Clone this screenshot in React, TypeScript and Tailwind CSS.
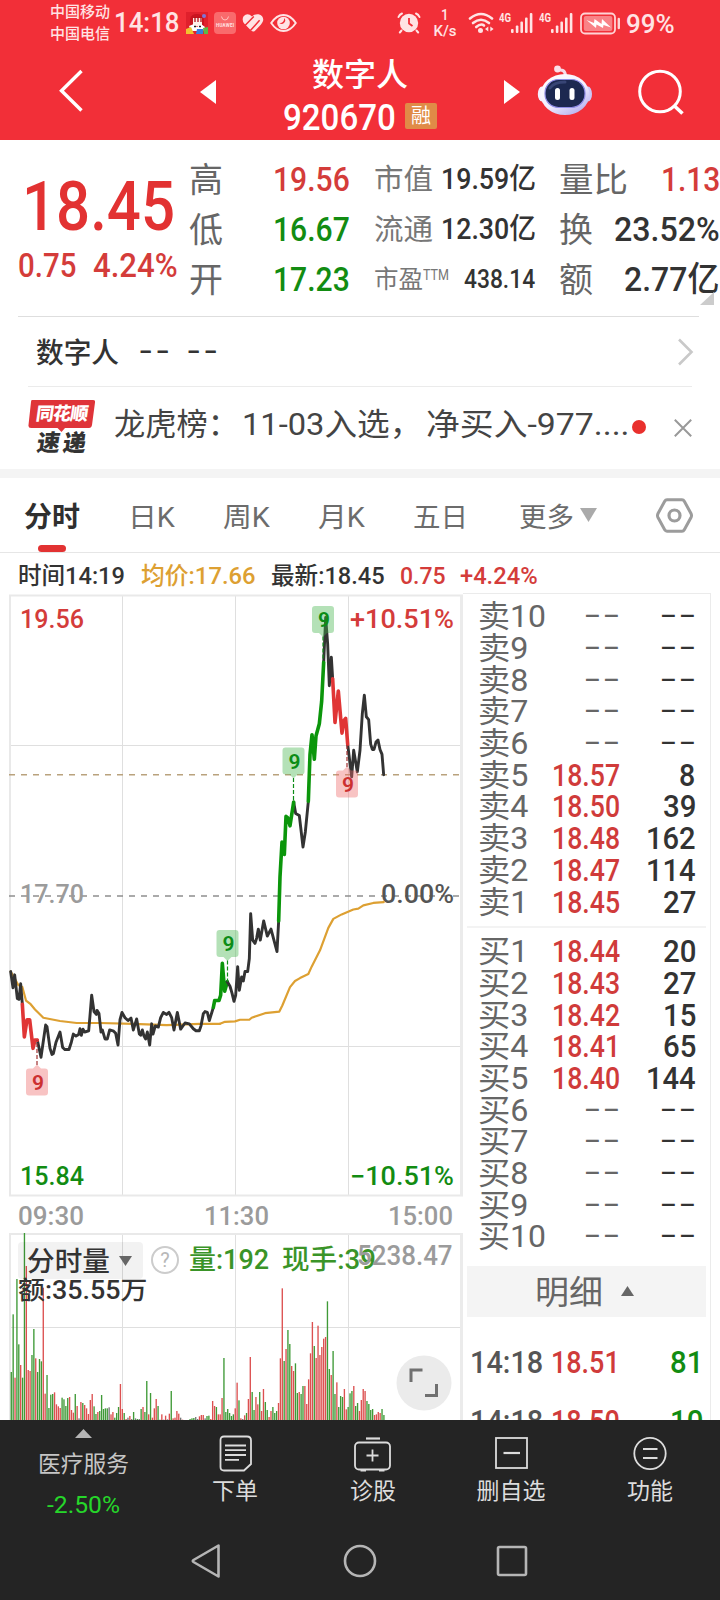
import { useLayoutEffect, useRef, useState, type ReactNode } from "react";

/** Single line of text, horizontally condensed or widened to an exact width. */
function Fit({ w, className = "", children }: { w: number; className?: string; children: ReactNode }) {
  const ref = useRef<HTMLSpanElement>(null);
  const [scale, setScale] = useState(1);
  useLayoutEffect(() => {
    if (ref.current) setScale(w / ref.current.offsetWidth);
  }, [w, children]);
  return (
    <span className={"block shrink-0 leading-none " + className} style={{ width: w }}>
      <span ref={ref} className="inline-block origin-left whitespace-nowrap align-top" style={{ transform: `scaleX(${scale})` }}>
        {children}
      </span>
    </span>
  );
}

function Signal() {
  return (
    <div className="flex h-[22px] w-[34px] shrink-0">
      <Fit w={12} className="text-[12px] font-bold">4G</Fit>
      <svg width="22" height="22" viewBox="0 0 22 22" fill="#ffe3e4">
        <rect x="0" y="17" width="2.6" height="4" rx="1" />
        <rect x="4.8" y="13.5" width="2.6" height="7.5" rx="1" />
        <rect x="9.4" y="9.5" width="2.6" height="11.5" rx="1" />
        <rect x="14" y="5.5" width="2.6" height="15.5" rx="1" />
        <rect x="18.8" y="1" width="2.6" height="20" rx="1" />
      </svg>
    </div>
  );
}

function StatusBar() {
  return (
    <div className="flex h-[46px] items-center text-[#ffe3e4]">
      <div className="ml-[50px] w-[60px] text-[15px] leading-[22px] font-medium">
        <Fit w={60} className="leading-[22px]!">中国移动</Fit>
        <Fit w={60} className="leading-[22px]!">中国电信</Fit>
      </div>
      <Fit w={66} className="ml-[4px] text-[27px] font-medium">14:18</Fit>
      <svg className="ml-[6px]" width="22" height="22" viewBox="0 0 22 22">
        <rect width="22" height="22" fill="#e0202c" />
        <path d="M4 7Q5 2 11 2Q17 2 18 7V14H4Z" fill="#c9141f" />
        <path d="M7 6H16V14H7Z" fill="#fff0e8" />
        <path d="M9 5V10M12 5V10M15 5V10" stroke="#b3101a" strokeWidth="1.3" />
        <path d="M3 14L8 12L11 15L15 12L19 15L17 19H5Z" fill="#fff" />
        <path d="M8 14.5h2M13 14.5h2" stroke="#222" strokeWidth="1.5" />
        <path d="M0 17L5 15L8 22H0Z" fill="#f2c230" />
        <path d="M11 17H17V22H10Z" fill="#3a7ddc" />
        <path d="M17 16L22 15V22H18Z" fill="#5cb946" />
        <circle cx="18" cy="4" r="2" fill="#7d74d8" />
      </svg>
      <svg className="ml-[6px]" width="22" height="22" viewBox="0 0 22 22">
        <rect width="22" height="22" rx="4" fill="#f96a6c" />
        <path d="M7.5 4.5Q8 8 11 8Q14 8 14.5 4.5" fill="none" stroke="#ffc4c0" strokeWidth="1" />
        <text x="2" y="14.5" fontSize="4.5" fontWeight="700" fill="#ffe3e4" textLength="18">HUAWEI</text>
      </svg>
      <svg className="ml-[6px]" width="22" height="20" viewBox="0 0 22 20">
        <path d="M10 3.6Q12.500 .8 16.500 1.200Q21.300 2.200 21.300 7Q20.800 9.500 19 11.500L12.800 18Q11 19.200 9.300 17.800L2.400 10.800Q-.6 7 1.600 3.300Q5.500 -1 10 3.600Z" fill="#ffe3e4" />
        <path d="M2.800 12.800L11.800 3.400M8.400 17.600L17.600 7.200" stroke="#f22f38" strokeWidth="1.500" />
      </svg>
      <svg className="ml-[6px]" width="27" height="20" viewBox="0 0 27 20">
        <path d="M1.2 10Q6.5 2 13.5 2T25.8 10Q20.5 18 13.5 18T1.2 10Z" fill="none" stroke="#ffe3e4" strokeWidth="1.9" />
        <circle cx="13.5" cy="10" r="6.3" fill="#ffe3e4" />
        <path d="M9.4 10A4.1 4.1 0 0 0 14 5A2.6 2.6 0 1 1 9.4 10Z" fill="#f22f38" />
      </svg>
      <svg className="ml-[100px]" width="24" height="22" viewBox="0 0 24 22">
        <circle cx="12" cy="11" r="9.2" fill="#ffe3e4" />
        <path d="M12 6V11.5L15.5 14" fill="none" stroke="#f22f38" strokeWidth="1.8" />
        <path d="M1.5 5Q2.5 2.5 5 1.5M22.5 5Q21.500 2.500 19 1.500M4.500 18.500L2.800 20.500M19.500 18.500L21.200 20.500" stroke="#ffe3e4" strokeWidth="2" fill="none" strokeLinecap="round" />
      </svg>
      <div className="ml-[12px] flex w-[24px] flex-col items-center gap-[1px] pt-[1px] text-[15px] font-medium">
        <Fit w={8}>1</Fit>
        <Fit w={23}>K/s</Fit>
      </div>
      <svg className="ml-[11px]" width="27" height="22" viewBox="0 0 27 22" fill="none" stroke="#ffe3e4" strokeWidth="2.6" strokeLinecap="round">
        <path d="M2 6.5Q13 -2.5 24 6.5" />
        <path d="M5 11Q13 4.5 21 11" />
        <path d="M8.2 15Q13 11 16 13.5" />
        <circle cx="12.5" cy="18.5" r="1.2" fill="#ffe3e4" />
        <path d="M20.3 14.5V19.5L17 17ZM22.3 14.5V19.5L25.6 17Z" fill="#ffe3e4" stroke="none" />
      </svg>
      <div className="ml-[4px] flex gap-[6px]">
        <Signal />
        <Signal />
      </div>
      <svg className="ml-[7px]" width="42" height="23" viewBox="0 0 42 23">
        <rect x="1" y="1.5" width="34" height="20" rx="4" fill="none" stroke="#ffd3d5" strokeWidth="1.8" />
        <rect x="3.8" y="4" width="28.5" height="15" rx="2" fill="#f98287" />
        <path d="M6.5 8L14 11L14.5 7L21.5 12L22 7L31 15.5L23.5 13L23 16L16.5 12.5L16 16Z" fill="#fff" />
        <path d="M38.8 7V16" stroke="#ffd3d5" strokeWidth="2.4" strokeLinecap="round" />
      </svg>
      <Fit w={49} className="ml-[4px] pt-[2px] text-[26px] font-medium">99%</Fit>
    </div>
  );
}

function TitleBar() {
  return (
    <div className="flex h-[94px] items-start text-white">
      <svg className="mt-[23px] ml-[58px] shrink-0" width="26" height="44" viewBox="0 0 26 44">
        <path d="M23.5 2L3.5 21.7L23.5 41.5" fill="none" stroke="#fff" strokeWidth="3.4" />
      </svg>
      <svg className="mt-[34px] ml-[116px] shrink-0" width="16" height="24"><path d="M16 0V24L0 12Z" fill="#fff" /></svg>
      <div className="ml-[67px] w-[154px] shrink-0 pt-[13px]">
        <Fit w={96} className="ml-[29px] text-[32px] font-medium">数字人</Fit>
        <div className="mt-[7px] flex h-[36px] items-center">
          <Fit w={113} className="pt-[4px] text-[36px] font-medium">920670</Fit>
          <span className="ml-[9px] flex h-[26px] w-[32px] items-center justify-center rounded-[2px] bg-[#e08b47] text-[20px] leading-none">融</span>
        </div>
      </div>
      <svg className="mt-[34px] ml-[67px] shrink-0" width="16" height="24"><path d="M0 0V24L16 12Z" fill="#fff" /></svg>
      <svg className="mt-[18px] ml-[17px] shrink-0" width="56" height="53" viewBox="0 0 56 53">
        <defs>
          <linearGradient id="shell" x1="0" y1="0" x2="0.7" y2="1">
            <stop offset="0" stopColor="#fff" /><stop offset=".6" stopColor="#f3efff" /><stop offset="1" stopColor="#b9b4f0" />
          </linearGradient>
        </defs>
        <path d="M20 6.5Q28 4 28.5 12" fill="none" stroke="#f4dcea" strokeWidth="3" />
        <circle cx="20.5" cy="5" r="3.400" fill="#fbe0ea" />
        <ellipse cx="5" cy="30" rx="4.2" ry="7.5" fill="#f5efff" />
        <ellipse cx="51" cy="30" rx="4" ry="7.5" fill="#cdc7f6" />
        <ellipse cx="28" cy="30.500" rx="24.500" ry="20.500" fill="url(#shell)" />
        <rect x="8" y="15.500" width="40" height="28" rx="13.500" fill="#1c2850" stroke="#8f8ce6" strokeWidth="1.2" />
        <path d="M13 24Q17 18 28 18" stroke="#54619a" strokeWidth="3" fill="none" strokeLinecap="round" opacity=".5" />
        <rect x="18" y="24" width="5" height="12" rx="2.500" fill="#fff" />
        <rect x="32.500" y="24" width="5" height="12" rx="2.500" fill="#fff" />
      </svg>
      <svg className="mt-[22px] ml-[44px] shrink-0" width="48" height="48" viewBox="0 0 48 48" fill="none" stroke="#fff" strokeWidth="3">
        <circle cx="23" cy="23.5" r="20.3" />
        <path d="M37.5 38L45.5 45.5" strokeWidth="3.6" />
      </svg>
    </div>
  );
}

function Quote() {
  const row = "flex h-[50px] items-center";
  return (
    <section className="flex h-[176px] pt-[14px]">
      <div className="w-[189px] shrink-0 pt-[18px] text-[#e23232]">
        <Fit w={153} className="ml-[22px] text-[69px] font-medium">18.45</Fit>
        <div className="mt-[8px] flex text-[#d43c3a]">
          <Fit w={58} className="ml-[18px] text-[33px] font-medium">0.75</Fit>
          <Fit w={85} className="ml-[17px] text-[33px] font-medium">4.24%</Fit>
        </div>
      </div>
      <div className="w-[185px] shrink-0 text-[34px] font-medium">
        <div className={row}><span className="w-[84px] pt-[1px] leading-none font-normal text-[#666]">高</span><Fit w={77} className="text-[#d43c3a]">19.56</Fit></div>
        <div className={row}><span className="w-[84px] pt-[1px] leading-none font-normal text-[#666]">低</span><Fit w={77} className="text-[#128c12]">16.67</Fit></div>
        <div className={row}><span className="w-[84px] pt-[1px] leading-none font-normal text-[#666]">开</span><Fit w={77} className="text-[#128c12]">17.23</Fit></div>
      </div>
      <div className="w-[185px] shrink-0 text-[#333]">
        <div className={row}><Fit w={59} className="pt-[2px] text-[29px] text-[#777]">市值</Fit><Fit w={95} className="ml-[8px] pt-[1px] text-[29px] font-medium">19.59亿</Fit></div>
        <div className={row}><Fit w={59} className="pt-[2px] text-[29px] text-[#777]">流通</Fit><Fit w={95} className="ml-[8px] pt-[1px] text-[29px] font-medium">12.30亿</Fit></div>
        <div className={row}>
          <Fit w={49} className="text-[25px] text-[#777]">市盈</Fit>
          <Fit w={26} className="mb-[9px] text-[14px] text-[#777]">TTM</Fit>
          <Fit w={71} className="ml-[15px] text-[26px] font-medium">438.14</Fit>
        </div>
      </div>
      <div className="relative w-[161px] shrink-0 text-[34px] font-medium text-[#333]">
        <div className={row}><Fit w={69} className="pt-[1px] font-normal text-[#666]">量比</Fit><Fit w={59} className="ml-[33px] text-[#d43c3a]">1.13</Fit></div>
        <div className={row}><Fit w={34} className="pt-[1px] font-normal text-[#666]">换</Fit><Fit w={106} className="ml-[21px]">23.52%</Fit></div>
        <div className={row}><Fit w={34} className="pt-[1px] font-normal text-[#666]">额</Fit><Fit w={95} className="ml-[31px]">2.77亿</Fit></div>
        <svg className="absolute top-[138px] left-[141px]" width="14" height="13"><path d="M14 0V13H0Z" fill="#ccc" /></svg>
      </div>
    </section>
  );
}

function Dashes({ weight = 2.5, gap = 6 }: { weight?: number; gap?: number }) {
  return (
    <span className="relative block">
      <span className="block text-[31px] leading-none text-transparent tracking-[2.5px]">--</span>
      <svg className="absolute top-[14px] left-0" width={26 + gap} height="4">
        <path d={`M0 2H13M${13 + gap} 2H${26 + gap}`} stroke="currentColor" strokeWidth={weight} />
      </svg>
    </span>
  );
}

function Notices() {
  return (
    <>
      <div className="mr-[21px] ml-[18px] h-px bg-[#dedede]" />
      <div className="flex h-[69px] items-center pl-[36px] text-[28px] font-medium text-[#333]">
        <Fit w={83} className="pt-[4px]">数字人</Fit>
        <Fit w={34} className="ml-[20px] translate-y-[-1px] tracking-[2.5px]">--</Fit>
        <Fit w={34} className="ml-[14px] translate-y-[-1px] tracking-[2.5px]">--</Fit>
        <svg className="ml-[456px]" width="17" height="28" viewBox="0 0 17 28"><path d="M2 1.5L14.5 14L2 26.5" fill="none" stroke="#c9c9c9" strokeWidth="2.6" /></svg>
      </div>
      <div className="mr-[28px] ml-[28px] h-px bg-[#ebebeb]" />
      <div className="flex h-[82px] items-center">
        <div className="mt-[-1px] ml-[28px] flex h-[55px] w-[67px] shrink-0 flex-col">
          <div className="relative flex h-[28px] items-center justify-center">
            <svg className="absolute top-0 left-0" width="67" height="32" viewBox="0 0 67 32">
              <path d="M4 0H65Q67.5 0 67 2.5L64 25Q63.5 28 61 28H37L33.5 32L29.5 28H3Q0 28 .5 25L3 2Q3 0 4 0Z" fill="#df3439" />
            </svg>
            <span className="relative -skew-x-[8deg] text-[18px] leading-none font-black whitespace-nowrap text-white tracking-[-0.8px]">同花顺</span>
          </div>
          <div className="mt-[4px] ml-[9px] flex w-[49px] -skew-x-[8deg] justify-between text-[23px] leading-none font-black text-[#333]"><span>速</span><span>递</span></div>
        </div>
        <div className="ml-[19px] flex text-[31px] text-[#444]">
          <Fit w={125} className="-translate-y-[4px]">龙虎榜：</Fit>
          <Fit w={180} className="ml-[3px] -translate-y-[4px]">11-03入选，</Fit>
          <Fit w={204} className="ml-[4px] -translate-y-[4px]">净买入-977....</Fit>
        </div>
        <span className="ml-[2px] h-[14px] w-[14px] -translate-y-px rounded-full bg-[#e9302d]" />
        <svg className="ml-[28px]" width="18" height="18" viewBox="0 0 18 18"><path d="M.8 .8L17.2 17.2M17.2 .8L.8 17.2" stroke="#999" strokeWidth="2" /></svg>
      </div>
      <div className="h-[9px] bg-[#f4f4f4]" />
    </>
  );
}

function Tabs() {
  return (
    <nav className="flex h-[75px] items-center border-b border-[#e6e6e6] text-[27px] text-[#6c6c6c]">
      <div className="relative ml-[24px] font-bold text-[#2f2f2f]">
        <Fit w={56} className="translate-y-[3px] text-[28px]">分时</Fit>
        <span className="absolute top-[44px] left-[14px] h-[7px] w-[28px] rounded-full bg-[#e23232]" />
      </div>
      <Fit w={47} className="ml-[48px] translate-y-[3px]">日K</Fit>
      <Fit w={47} className="ml-[48px] translate-y-[3px]">周K</Fit>
      <Fit w={47} className="ml-[48px] translate-y-[3px]">月K</Fit>
      <Fit w={55} className="ml-[48px] translate-y-[3px]">五日</Fit>
      <Fit w={55} className="ml-[51px] translate-y-[3px]">更多</Fit>
      <svg className="ml-[6px]" width="17" height="14"><path d="M0 0H17L8.5 14Z" fill="#aaa" /></svg>
      <svg className="ml-[59px]" width="37" height="35" viewBox="0 0 37 35" fill="none" stroke="#9c9c9c">
        <path d="M11 1.8H26Q27.5 1.8 28.3 3.2L35 15.5Q36 17.5 35 19.5L28.3 31.8Q27.5 33.2 26 33.2H11Q9.5 33.2 8.7 31.8L2 19.5Q1 17.5 2 15.5L8.7 3.2Q9.5 1.8 11 1.8Z" strokeWidth="3" />
        <circle cx="18.5" cy="17.5" r="5.5" strokeWidth="3.2" />
      </svg>
    </nav>
  );
}

function Legend() {
  return (
    <div className="flex h-[40px] items-center pt-[6px] text-[24px] font-medium text-[#333]">
      <Fit w={107} className="ml-[18px]">时间14:19</Fit>
      <Fit w={115} className="ml-[16px] text-[#dda032]">均价:17.66</Fit>
      <Fit w={114} className="ml-[15px]">最新:18.45</Fit>
      <Fit w={46} className="ml-[15px] text-[#d43c3a]">0.75</Fit>
      <Fit w={78} className="ml-[14px] text-[#d43c3a]">+4.24%</Fit>
    </div>
  );
}

const morning = {
  average: "32,932 55,965 67,970 78,1003 92,1012 105,1025 130,1045 180,1053 230,1058 300,1058 400,1060 500,1063 600,1060 660,1060",
  dark: [
    "32,932 39,972 44,940 52,998 57,1000 62,962 67,1012",
    "112,1100 123,1142 137,1063 141,1067 150,1120 156,1135 160,1133 168,1105 180,1080 188,1118 195,1123 207,1123 214,1105 220,1085 228,1090 236,1086 240,1072 244,1088 249,1073 254,1080 266,1077 270,1040 275,990 282,1030 289,1037 291,1027 297,1035 303,1080 307,1075 315,1097 322,1097 329,1075 341,1078 347,1083 354,1112 360,1050 366,1032 375,1045 384,1052 393,1046 400,1075 410,1048 418,1085 422,1088 427,1075 432,1090 437,1097 442,1080 449,1112 455,1060 459,1085 466,1065 475,1068 482,1045 490,1032 500,1037 507,1032 515,1045 522,1075 532,1032 542,1073 555,1058 568,1060 580,1072 588,1077 598,1077 603,1065 610,1035 615,1030 622,1032 628,1052 640,1020",
  ],
  red: ["67,1012 73,1092 81,1050 89,1050 99,1120 105,1100 112,1100"],
  green: ["640,1020 644,1003 657,1003 662,990 667,912 674,980 682,957"],
};

const afternoon = {
  average: "0,1060 15,1055 45,1054 60,1050 88,1050 95,1045 135,1034 178,1030 187,1015 210,970 225,955 240,948 265,938 275,920 300,880 325,825 340,803 365,792 400,780 415,778 430,770 460,764 491,762",
  dark: [
    "22,957 30,968 36,985 42,1005 47,990 53,920 58,978 65,945 70,955 75,932 83,932 88,900 92,790 98,855 105,863 110,850 115,828 121,855 131,808 142,845 153,828 171,883 176,808",
    "221,517 227,545 238,550 249,627 256,590 265,515",
    "311,175 317,65 323,130 328,232 334,162 338,215",
    "383,375 395,455 401,390 412,443 420,390 427,300 433,255 439,308 446,315 452,375 457,388 462,388 468,370 474,365 480,388 486,400 491,450",
  ],
  red: ["338,215 345,322 355,245 366,348 371,318 377,312 383,375"],
  green: [
    "176,808 180,700 186,615 193,645 198,552 203,555 210,575 221,517",
    "265,515 270,400 276,352 283,412 288,355 298,325 305,270 311,175",
  ],
};

function Line({ points, color, width }: { points: string; color: string; width: number }) {
  return <polyline points={points} stroke={color} strokeWidth={width} vectorEffect="non-scaling-stroke" />;
}

function Series({ data, x }: { data: typeof morning; x: number }) {
  return (
    <g transform={`translate(${x} 590) scale(0.33333 0.40833)`} fill="none" strokeLinejoin="round" strokeLinecap="round">
      <Line points={data.average} color="#dda032" width={2.2} />
      {data.dark.map((p) => <Line key={p} points={p} color="#333" width={2.9} />)}
      {data.red.map((p) => <Line key={p} points={p} color="#e03535" width={3.6} />)}
      {data.green.map((p) => <Line key={p} points={p} color="#0b960b" width={3.6} />)}
    </g>
  );
}

function Marker({ x, y, up, to }: { x: number; y: number; up?: boolean; to: number }) {
  const color = up ? "#0c8c16" : "#cc3030";
  return (
    <g>
      <path
        d={up
          ? `M${x - 8} ${y - 13.5}h16q3 0 3 3v21q0 3 -3 3h-4l-4 4l-4 -4h-4q-3 0 -3 -3v-21q0 -3 3 -3Z`
          : `M${x - 8} ${y - 13.5}h4l4 -4l4 4h4q3 0 3 3v21q0 3 -3 3h-16q-3 0 -3 -3v-21q0 -3 3 -3Z`}
        fill={up ? "#43b54c" : "#ee6868"}
        fillOpacity=".4"
      />
      <path d={`M${x} ${up ? y + 17 : y - 17}V${to}`} stroke={up ? color : "#a03030"} strokeDasharray="4 2" strokeWidth="1.2" />
      <text x={x - 5} y={y + 7.5} fontSize="21" fontWeight="600" fill={color} textLength="12" lengthAdjust="spacingAndGlyphs">9</text>
    </g>
  );
}

function Label({ x, y, w, fill, children }: { x: number; y: number; w: number; fill: string; children: string }) {
  return <text x={x} y={y} fontSize="25" fontWeight="500" fill={fill} textLength={w} lengthAdjust="spacingAndGlyphs">{children}</text>;
}

function PriceChart() {
  return (
    <svg className="block" width="463" height="640" viewBox="0 592 463 640">
      <path d="M9 744.5H462M9 1045.5H462M122.5 594V1195M235.5 594V1195M348.5 594V1195" stroke="#dfdfdf" />
      <path d="M9 594.5H463M9 1194.5H463M10 594V1195" stroke="#e9e9e9" strokeWidth="2" />
      <path d="M461.5 594V1195" stroke="#ebebeb" strokeWidth="3" />
      <path d="M9 773.8H459" stroke="#b9a27d" strokeWidth="1.6" strokeDasharray="6 6" />
      <path d="M9 895H459" stroke="#8f8f8f" strokeWidth="1.6" strokeDasharray="6 6" />
      <Label x={20} y={626.5} w={64} fill="#d43c3a">19.56</Label>
      <Label x={350} y={626.5} w={104} fill="#d43c3a">+10.51%</Label>
      <Label x={20} y={901.5} w={64} fill="#9b9b9b">17.70</Label>
      <Label x={381} y={901.5} w={73} fill="#555">0.00%</Label>
      <Label x={20} y={1183.5} w={64} fill="#128c12">15.84</Label>
      <Label x={350} y={1183.5} w={104} fill="#128c12">−10.51%</Label>
      <Label x={18} y={1224} w={66} fill="#9b9b9b">09:30</Label>
      <Label x={204} y={1224} w={65} fill="#9b9b9b">11:30</Label>
      <Label x={388} y={1224} w={65} fill="#9b9b9b">15:00</Label>
      <Series data={morning} x={0} />
      <Series data={afternoon} x={220} />
      <Marker x={37} y={1081} to={1039} />
      <Marker x={227.5} y={942.5} up to={981} />
      <Marker x={293.5} y={760} up to={801} />
      <Marker x={323} y={618.5} up to={661} />
      <Marker x={347} y={783} to={743} />
    </svg>
  );
}

const volumes =
  "g453 g280 r470 g174 g370 r432 g470 g36 r135 r447 r450 g402 g324 r412 g453 g414 g421 r200 r518 g462 g561 g521 g519 r514 r550 r556 r561 g530 g535 g555 g531 r528 r567 r575 g519 r555 k592 r543 g546 r552 r562 r579 r537 r519 g556 g579 r573 g570 g522 g564 g562 g562 k559 r580 r573 g590 g576 g558 r489 r564 g576 r594 k590 r585 k594 g573 k592 g594 k594 g564 r558 g573 g480 r580 g516 r590 r562 r534 g555 k596 r580 k596 r584 k595 r578 g510 r592 r590 r570 r578 k590 r596 k597 k597 k597 g594 g592 g591 k588 k594 r586 r582 r582 k592 g585 g584 r594 r540 r555 g558 r580 r580 r531 g411 g573 g564 g576 g585 g580 r562 r485 g538 r592 k594 r583 g576 r534 r408 g513 g567 r528 r550 g513 r570 r504 g543 g567 r588 r570 g558 g576 g570 r546 r412 r202 g420 r384 g327 g369 r435 r450 g427 g516 r513 g519 g495 r495 r549 r475 r397 r303 g375 r411 r314 r402 r378 r353 r348 g241 g444 r462 g390 g519 r484 g558 g525 g528 r504 r565 g558 g517 g510 r495 g555 g546 r570 r537 r504 r510 g540 g549 g567 g564 r582 r580 r573 r576 g564 g582".split(" ");
const barColor: Record<string, string> = { g: "#3f9a37", r: "#dc5050", k: "#777" };

function VolumeChart() {
  return (
    <div className="relative h-[188px] w-[463px]">
      <svg className="absolute inset-0" width="463" height="188" viewBox="0 1232 463 188">
        <path d="M9 1326.5H462M122.5 1232V1420M235.5 1232V1420M348.5 1232V1420" stroke="#dfdfdf" />
        <path d="M9 1233H463M10 1232V1420" stroke="#e9e9e9" strokeWidth="2" />
        <path d="M461.5 1232V1420" stroke="#ebebeb" strokeWidth="3" />
        <path d="M9 1419.5H462" stroke="#e3e3e3" />
        {volumes.map((v, i) => {
          const top = 1220 + Number(v.slice(1)) / 3;
          return <rect key={i} x={10.6 + i * 1.882} y={top} width="1.35" height={1420 - top} fill={barColor[v[0]]} />;
        })}
      </svg>
      <div className="relative flex h-[46px] items-center pt-[9px] pl-[18px] text-[27px] font-medium text-[#3a9428]">
        <div className="flex h-[37px] w-[125px] shrink-0 items-center rounded-[4px] bg-black/5 pl-[9px] text-[#333]">
          <Fit w={83} className="pt-[3px]">分时量</Fit>
          <svg className="ml-[9px]" width="13" height="10"><path d="M0 0H13L6.5 10Z" fill="#666" /></svg>
        </div>
        <span className="ml-[8px] flex h-[28px] w-[28px] shrink-0 -translate-y-px items-center justify-center rounded-full border-2 border-[#ccc] text-[20px] leading-none font-normal text-[#b8b8b8]">?</span>
        <Fit w={80} className="ml-[10px]">量:192</Fit>
        <Fit w={94} className="ml-[13px]">现手:39</Fit>
      </div>
      <Fit w={96} className="absolute top-[10px] left-[357px] text-[27px] font-medium text-[#9b9b9b]">5238.47</Fit>
      <Fit w={129} className="relative ml-[18px] -translate-y-px text-[25px] font-medium text-[#333]">额:35.55万</Fit>
      <svg className="absolute top-[122px] left-[396px]" width="56" height="56" viewBox="0 0 56 56">
        <circle cx="28" cy="28" r="27.5" fill="#ebebeb" />
        <path d="M15 27V15H26.500M29 40.500H40.500V29" fill="none" stroke="#707070" strokeWidth="3" />
      </svg>
    </div>
  );
}

type Level = [string, string?, string?];
const asks: Level[] = [["卖10"], ["卖9"], ["卖8"], ["卖7"], ["卖6"], ["卖5", "18.57", "8"], ["卖4", "18.50", "39"], ["卖3", "18.48", "162"], ["卖2", "18.47", "114"], ["卖1", "18.45", "27"]];
const bids: Level[] = [["买1", "18.44", "20"], ["买2", "18.43", "27"], ["买3", "18.42", "15"], ["买4", "18.41", "65"], ["买5", "18.40", "144"], ["买6"], ["买7"], ["买8"], ["买9"], ["买10"]];

function Levels({ rows }: { rows: Level[] }) {
  return (
    <div className="flex flex-col text-[31px]">
      {rows.map(([name, price, volume]) => (
        <div key={name} className="flex h-[31.7px] items-center">
          <div className="w-[73px] shrink-0 pl-[15px] text-[#666]">
            <Fit w={name.length === 3 ? 68 : 50}>{name}</Fit>
          </div>
          <div className="flex w-[83px] shrink-0 justify-end">
            {price
              ? <Fit w={68} className="mr-[-1px] font-medium text-[#d03b3a]">{price}</Fit>
              : <Fit w={38} className="mr-[-4px] -translate-y-[2px] tracking-[2.5px] text-[#666]">--</Fit>}
          </div>
          <div className="flex w-[76px] shrink-0 justify-end text-[#333]">
            {volume
              ? <Fit w={volume.length * 16.6} className="mr-[-1px] font-medium">{volume}</Fit>
              : <Fit w={38} className="mr-[-4px] -translate-y-[2px] tracking-[2.5px]">--</Fit>}
          </div>
        </div>
      ))}
    </div>
  );
}

function OrderBook() {
  return (
    <div className="h-[828px] w-[248px] overflow-hidden border-t border-r border-[#ebebeb] bg-white pt-[7px]">
      <Levels rows={asks} />
      <div className="mt-[8px] mr-[4px] ml-[4px] h-[2px] bg-[#f3f3f3]" />
      <div className="mt-[8px]"><Levels rows={bids} /></div>
      <div className="mt-[13px] ml-[4px] flex h-[51px] w-[239px] items-center bg-[#f4f4f4] pl-[68px]">
        <Fit w={68} className="pt-[3px] text-[33px] text-[#666]">明细</Fit>
        <svg className="ml-[18px]" width="13" height="10"><path d="M0 10H13L6.5 0Z" fill="#666" /></svg>
      </div>
      <div className="pt-[16px] text-[32px] font-medium">
        {[["18.51", "81"], ["18.50", "10"]].map(([price, volume]) => (
          <div key={price} className="flex h-[59px] items-center">
            <Fit w={73} className="ml-[7px] text-[#555]">14:18</Fit>
            <Fit w={69} className="ml-[8px] text-[#d03b3a]">{price}</Fit>
            <Fit w={33} className="ml-[50px] text-[#128c12]">{volume}</Fit>
          </div>
        ))}
      </div>
    </div>
  );
}

function BottomBar() {
  const item = "flex flex-col items-center gap-[8px] pt-[15px] text-[23px] text-[#dcdcdc]";
  return (
    <footer className="h-[180px] shrink-0 bg-[#242424]">
      <div className="flex h-[110px] items-start">
        <div className="ml-[37px] flex w-[92px] flex-col items-center pt-[9px]">
          <svg width="17" height="9"><path d="M0 9H17L8.5 0Z" fill="#b5b5b5" /></svg>
          <Fit w={91} className="mt-[15px] text-[23px] text-[#c6c6c6]">医疗服务</Fit>
          <Fit w={73} className="mt-[17px] text-[24px] text-[#26d62a]">-2.50%</Fit>
        </div>
        <div className={item + " ml-[83px] w-[46px]"}>
          <svg width="33" height="37" viewBox="0 0 33 37" fill="none" stroke="#dcdcdc" strokeWidth="1.8">
            <path d="M5 1.5H28Q32 1.5 32 5.5V29L25 35.5H5Q1.5 35.5 1.5 32V5Q1.5 1.5 5 1.5Z" />
            <path d="M6 10.5H27M6 15.2H27M6 20H27M6 24.8H20" />
          </svg>
          <Fit w={46}>下单</Fit>
        </div>
        <div className={item + " ml-[92px] w-[46px]"}>
          <svg width="38" height="37" viewBox="0 0 38 37" fill="none" stroke="#dcdcdc" strokeWidth="1.8">
            <path d="M12 3.5H26" strokeWidth="2.2" />
            <rect x="1" y="7.5" width="35" height="27" rx="4" />
            <path d="M18.5 14.5V26.5M12.5 20.5H24.500" />
            <path d="M6.500 35.500H12M25 35.500H30.500" strokeWidth="2.200" />
          </svg>
          <Fit w={46}>诊股</Fit>
        </div>
        <div className={item + " ml-[80px] w-[70px]"}>
          <svg width="33" height="37" viewBox="0 0 33 37" fill="none" stroke="#dcdcdc" strokeWidth="1.8">
            <rect x="1" y="3" width="31" height="30" />
            <path d="M8.5 18H25" strokeWidth="2.2" />
          </svg>
          <Fit w={69}>删自选</Fit>
        </div>
        <div className={item + " ml-[81px] w-[46px]"}>
          <svg width="34" height="37" viewBox="0 0 34 37" fill="none" stroke="#dcdcdc" strokeWidth="1.8">
            <circle cx="17" cy="18.5" r="15.7" />
            <path d="M10 14H24.5M10 23H24.5" />
          </svg>
          <Fit w={46}>功能</Fit>
        </div>
      </div>
      <div className="flex h-[62px] items-center">
        <svg className="ml-[190px]" width="32" height="36" viewBox="0 0 32 36"><path d="M28.5 2.5V33.5L3.5 19Q2 18 3.5 17Z" fill="none" stroke="#b5b5b5" strokeWidth="2.6" strokeLinejoin="round" /></svg>
        <svg className="ml-[121px]" width="34" height="34" viewBox="0 0 34 34"><circle cx="17" cy="17" r="15" fill="none" stroke="#b5b5b5" strokeWidth="2.6" /></svg>
        <svg className="ml-[119px]" width="32" height="32" viewBox="0 0 32 32"><rect x="2" y="2" width="28" height="28" rx="1.5" fill="none" stroke="#b5b5b5" strokeWidth="2.6" /></svg>
      </div>
    </footer>
  );
}

export default function App() {
  return (
    <div className="flex h-[1600px] w-[720px] flex-col overflow-hidden bg-white font-['Roboto','Noto_Sans_CJK_SC',sans-serif]">
      <header className="h-[140px] shrink-0 bg-[#f22f38]">
        <StatusBar />
        <TitleBar />
      </header>
      <Quote />
      <Notices />
      <Tabs />
      <Legend />
      <div className="flex h-[827px] shrink-0 overflow-hidden">
        <div className="w-[463px] shrink-0">
          <PriceChart />
          <VolumeChart />
        </div>
        <OrderBook />
      </div>
      <BottomBar />
    </div>
  );
}
